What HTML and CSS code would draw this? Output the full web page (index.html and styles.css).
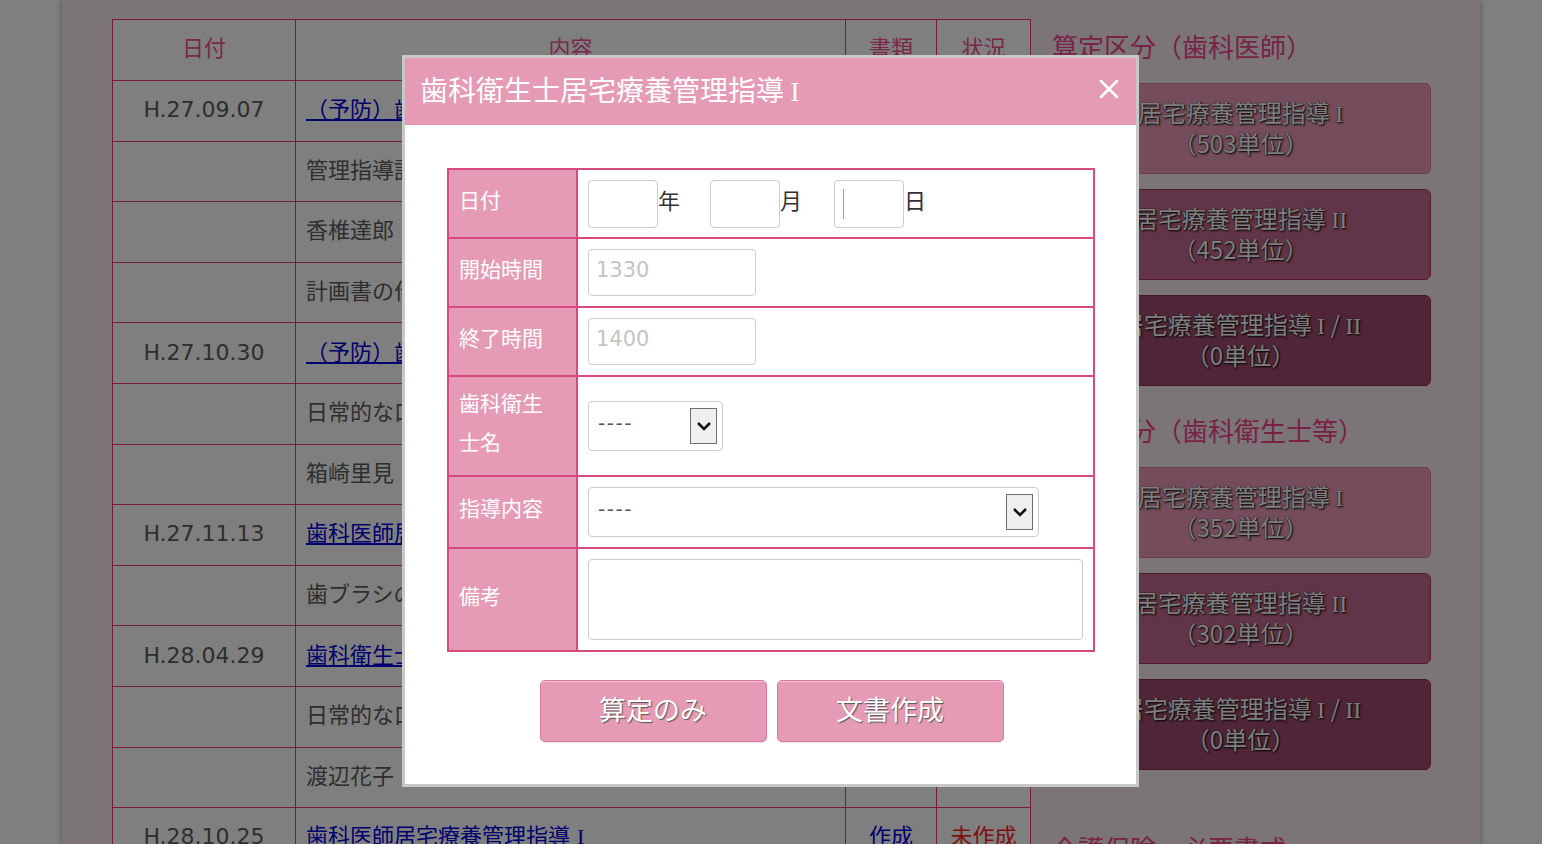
FILE: index.html
```html
<!DOCTYPE html>
<html lang="ja">
<head>
<meta charset="utf-8">
<title>歯科衛生士居宅療養管理指導</title>
<link rel="stylesheet" href="styles.css">
</head>
<body>
<div class="page">
  <main class="records">
    <table class="rec-table">
      <colgroup><col class="c-date"><col class="c-body"><col class="c-doc"><col class="c-state"></colgroup>
      <thead>
        <tr><th>日付</th><th>内容</th><th>書類</th><th>状況</th></tr>
      </thead>
      <tbody>
        <tr><td class="date">H.27.09.07</td><td class="body"><a href="#">（予防）歯科衛生士居宅療養管理指導 <span class="rn">I</span></a></td><td class="doc">作成</td><td class="state">作成済</td></tr>
        <tr><td class="date"></td><td class="body">管理指導計画書の作成</td><td></td><td></td></tr>
        <tr><td class="date"></td><td class="body">香椎達郎</td><td></td><td></td></tr>
        <tr><td class="date"></td><td class="body">計画書の作成と説明</td><td></td><td></td></tr>
        <tr><td class="date">H.27.10.30</td><td class="body"><a href="#">（予防）歯科衛生士居宅療養管理指導 <span class="rn">I</span></a></td><td class="doc">作成</td><td class="state">作成済</td></tr>
        <tr><td class="date"></td><td class="body">日常的な口腔ケアの指導</td><td></td><td></td></tr>
        <tr><td class="date"></td><td class="body">箱崎里見</td><td></td><td></td></tr>
        <tr><td class="date">H.27.11.13</td><td class="body"><a href="#">歯科医師居宅療養管理指導 <span class="rn">I</span></a></td><td class="doc">作成</td><td class="state">作成済</td></tr>
        <tr><td class="date"></td><td class="body">歯ブラシの使い方の指導</td><td></td><td></td></tr>
        <tr><td class="date">H.28.04.29</td><td class="body"><a href="#">歯科衛生士居宅療養管理指導 <span class="rn">I</span></a></td><td class="doc">作成</td><td class="state">作成済</td></tr>
        <tr><td class="date"></td><td class="body">日常的な口腔ケアの指導</td><td></td><td></td></tr>
        <tr><td class="date"></td><td class="body">渡辺花子</td><td></td><td></td></tr>
        <tr><td class="date">H.28.10.25</td><td class="body"><a href="#">歯科医師居宅療養管理指導 <span class="rn">I</span></a></td><td class="doc">作成</td><td class="state todo">未作成</td></tr>
      </tbody>
    </table>
  </main>

  <aside class="side">
    <h2 class="side-title">算定区分（歯科医師）</h2>
    <div class="calc-list">
      <button class="calc c1">居宅療養管理指導 <span class="rn">I</span><br>（503単位）</button>
      <button class="calc c2">居宅療養管理指導 <span class="rn">II</span><br>（452単位）</button>
      <button class="calc c3">居宅療養管理指導 <span class="rn">I</span> / <span class="rn">II</span><br>（0単位）</button>
    </div>
    <h2 class="side-title second">算定区分（歯科衛生士等）</h2>
    <div class="calc-list">
      <button class="calc c1">居宅療養管理指導 <span class="rn">I</span><br>（352単位）</button>
      <button class="calc c2">居宅療養管理指導 <span class="rn">II</span><br>（302単位）</button>
      <button class="calc c3">居宅療養管理指導 <span class="rn">I</span> / <span class="rn">II</span><br>（0単位）</button>
    </div>
    <h2 class="side-title third">介護保険　必要書式</h2>
  </aside>
</div>

<div class="overlay"></div>

<div class="modal">
  <div class="modal-head">
    <h1 class="modal-title">歯科衛生士居宅療養管理指導 <span class="rn">I</span></h1>
    <button class="close" aria-label="閉じる">
      <svg width="20" height="20" viewBox="0 0 20 20"><path d="M2 2 L18 18 M18 2 L2 18" stroke="#fff" stroke-width="2.6" stroke-linecap="round"/></svg>
    </button>
  </div>
  <div class="modal-body">
    <table class="form-table">
      <tr class="r-date">
        <th class="lbl">日付</th>
        <td>
          <div class="date-line">
            <input class="d-in" type="text"><span class="unit">年</span>
            <input class="d-in" type="text"><span class="unit wide">月</span>
            <span class="d-in caret"></span><span class="unit">日</span>
          </div>
        </td>
      </tr>
      <tr class="r-time">
        <th class="lbl">開始時間</th>
        <td><input class="t-in" type="text" placeholder="1330"></td>
      </tr>
      <tr class="r-time">
        <th class="lbl">終了時間</th>
        <td><input class="t-in" type="text" placeholder="1400"></td>
      </tr>
      <tr class="r-staff">
        <th class="lbl">歯科衛生<br>士名</th>
        <td>
          <div class="sel short"><span class="sel-text">----</span><span class="sel-btn"><svg width="16" height="10" viewBox="0 0 16 10"><path d="M2 2 L8 8 L14 2" fill="none" stroke="#111" stroke-width="2.6"/></svg></span></div>
        </td>
      </tr>
      <tr class="r-guide">
        <th class="lbl">指導内容</th>
        <td>
          <div class="sel long"><span class="sel-text">----</span><span class="sel-btn"><svg width="16" height="10" viewBox="0 0 16 10"><path d="M2 2 L8 8 L14 2" fill="none" stroke="#111" stroke-width="2.6"/></svg></span></div>
        </td>
      </tr>
      <tr class="r-note">
        <th class="lbl">備考</th>
        <td><textarea class="note"></textarea></td>
      </tr>
    </table>
    <div class="actions">
      <button class="act">算定のみ</button>
      <button class="act">文書作成</button>
    </div>
  </div>
</div>
</body>
</html>
```

FILE: styles.css
```css
* { box-sizing: border-box; }

body {
  margin: 0;
  background: #ffffff;
  font-family: "DejaVu Sans", "Noto Sans CJK JP", sans-serif;
  overflow: hidden;
}

.rn {
  font-family: "Liberation Serif", "Noto Sans CJK JP", serif;
  line-height: 1;
}

.page {
  width: 1418px;
  height: 844px;
  margin: 0 auto;
  background: #f8eaf0;
  box-shadow: 0 0 6px rgba(0, 0, 0, 0.35);
  display: flex;
  padding: 19px 0 0 50px;
}

.records {
  width: 918px;
  flex: none;
}

.rec-table {
  width: 918px;
  border-collapse: collapse;
  table-layout: fixed;
  background: #ffffff;
}

.c-date { width: 183px; }
.c-body { width: 550px; }
.c-doc { width: 91px; }
.c-state { width: 94px; }

.rec-table th,
.rec-table td {
  border: 1.5px solid #f03478;
  height: 60.6px;
  padding: 0 0 7px;
  font-size: 22px;
  font-weight: normal;
  color: #5c5c5c;
  white-space: nowrap;
  overflow: hidden;
}

.rec-table th {
  color: #f2508e;
  height: 61px;
  padding-bottom: 8px;
}

.rec-table td.date { text-align: center; padding-bottom: 2px; }
.rec-table td.body { padding-left: 10px; }
.rec-table td.doc { text-align: center; color: #0000dd; }
.rec-table td.state { text-align: center; color: #5c5c5c; }
.rec-table td.state.todo { color: #ff2020; }

.rec-table a { color: #0000dd; text-decoration: underline; }

.side {
  flex: 1;
  padding: 7px 0 0 20px;
}

.side-title {
  margin: 0 0 17px;
  padding-left: 2px;
  font-size: 26px;
  line-height: 40px;
  font-weight: normal;
  color: #f0448a;
  font-family: "Noto Sans CJK JP", sans-serif;
  white-space: nowrap;
}

.side-title.second { margin-top: 24px; }
.side-title.third { margin-top: 58px; }

.calc-list {
  display: flex;
  flex-direction: column;
  gap: 15px;
  width: 381px;
}

.calc {
  height: 91px;
  border-radius: 6px;
  border: 1px solid #d77a9e;
  color: #ffffff;
  font-family: "Noto Sans CJK JP", sans-serif;
  font-size: 24px;
  line-height: 31px;
  text-shadow: 1px 1px 2px #000, 0 0 1px #000;
  white-space: nowrap;
  padding: 0 0 4px;
}

.calc .rn { font-size: 24px; }

.calc.c1 { background: #e899b6; border-color: #d9789e; }
.calc.c2 { background: #c4698e; border-color: #b0305e; }
.calc.c3 { background: #a04a6e; border-color: #92284f; }

.overlay {
  position: fixed;
  inset: 0;
  background: rgba(0, 0, 0, 0.5);
}

.modal {
  position: fixed;
  left: 402px;
  top: 55px;
  width: 737px;
  height: 732px;
  border: 3px solid #c8c8c8;
  background: #ffffff;
  font-family: "Noto Sans CJK JP", sans-serif;
}

.modal-head {
  height: 67px;
  background: #e59ab5;
  display: flex;
  align-items: center;
  justify-content: space-between;
  padding: 0 17px 5px 15px;
}

.modal-title {
  margin: 0;
  font-size: 28px;
  font-weight: normal;
  color: #ffffff;
  white-space: nowrap;
}

.close {
  border: 0;
  background: none;
  padding: 0;
  width: 20px;
  height: 20px;
  display: flex;
}

.modal-body {
  padding: 43px 41px 0 42px;
}

.form-table {
  width: 648px;
  border-collapse: collapse;
  border: 2px solid #d84a7f;
}

.form-table th,
.form-table td {
  border: 2px solid #d84a7f;
  padding: 0;
}

.form-table td { padding: 0 10px; }

.form-table .lbl {
  width: 130px;
  background: #e59ab5;
  color: #ffffff;
  font-size: 21px;
  font-weight: normal;
  text-align: left;
  padding: 0 0 9px 10px;
  line-height: 1.85;
}

.r-date { height: 69px; }
.r-time { height: 69px; }
.r-staff { height: 100px; }
.r-guide { height: 72px; }
.r-note { height: 103px; }

.date-line {
  display: flex;
  align-items: center;
}

.d-in {
  width: 70px;
  height: 48px;
  border: 1px solid #cccccc;
  border-radius: 4px;
  font-size: 21px;
  padding: 0 7px;
  display: flex;
  align-items: center;
}

.d-in.caret::before {
  content: "";
  width: 1px;
  height: 30px;
  margin-left: 1px;
  background: #999999;
}

.unit {
  font-size: 22px;
  color: #333333;
  width: 22px;
  margin: 0 30px 10px 0;
  line-height: 1;
}

.unit.wide { margin-right: 32px; }

.t-in {
  width: 168px;
  height: 47px;
  border: 1px solid #cccccc;
  border-radius: 4px;
  font-family: "DejaVu Sans", sans-serif;
  font-size: 21px;
  padding: 0 7px 5px;
  display: block;
}

.t-in::placeholder { color: #c4c4c4; }

.sel {
  height: 50px;
  border: 1px solid #cccccc;
  border-radius: 4px;
  display: flex;
  align-items: center;
  justify-content: space-between;
  padding: 0 5px 0 9px;
}

.sel.short { width: 135px; }
.sel.long { width: 451px; }

.sel-text {
  font-family: "DejaVu Sans", sans-serif;
  font-size: 20px;
  color: #555555;
  letter-spacing: 1.5px;
  margin-bottom: 7px;
}

.sel-btn {
  width: 27px;
  height: 36px;
  background: #efefef;
  border: 1px solid #707070;
  display: flex;
  align-items: center;
  justify-content: center;
}

.note {
  display: block;
  width: 495px;
  height: 81px;
  border: 1px solid #cccccc;
  border-radius: 4px;
  resize: none;
}

.actions {
  display: flex;
  justify-content: center;
  gap: 10px;
  margin-top: 28px;
  padding-left: 1px;
}

.act {
  width: 227px;
  height: 62px;
  background: #e59ab5;
  border: 1px solid #d9789e;
  border-radius: 5px;
  box-shadow: inset 0 1px 0 rgba(255, 255, 255, 0.45), 0 1px 1px rgba(0, 0, 0, 0.1);
  color: #ffffff;
  font-family: "Noto Sans CJK JP", sans-serif;
  font-size: 27px;
  text-shadow: 1px 1px 1px #555555;
  padding: 0 0 6px;
}
```
